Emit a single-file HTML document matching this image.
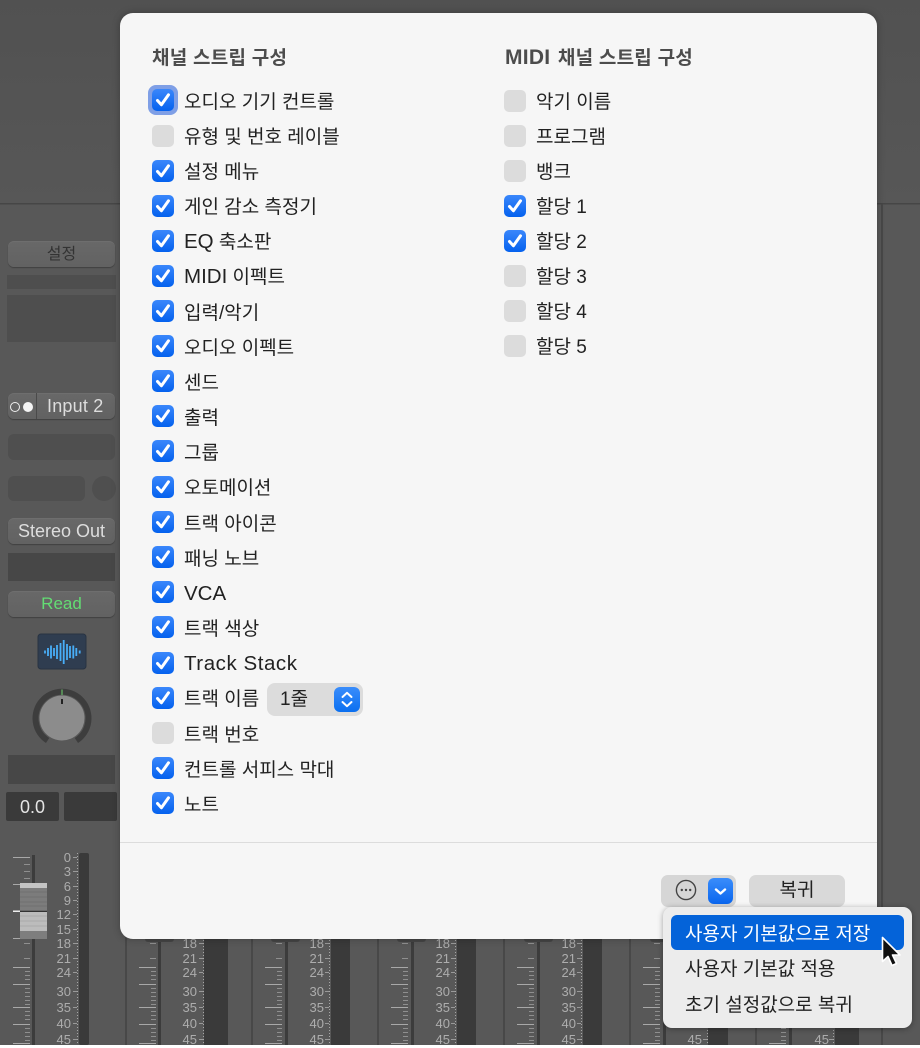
<!DOCTYPE html>
<html lang="ko"><head><meta charset="utf-8"><title>채널 스트립 구성</title>
<style>
html,body{margin:0;padding:0;background:#fff}
#p{position:relative;width:920px;height:1048px;overflow:hidden;background:#fff;font-family:"Liberation Sans","Noto Sans CJK KR",sans-serif}
#bg{position:absolute;left:0;top:0}
.a{position:absolute;box-sizing:border-box}
.btn{position:absolute;box-sizing:border-box;left:8px;width:107px;height:26px;border-radius:6px;background:linear-gradient(#686868,#626262);box-shadow:0 1px 1px #404040,inset 0 1px 0 #6e6e6e;color:#ddd;font-size:18px;line-height:26px;text-align:center}
.slot{position:absolute;background:#4f4f4f;border-radius:6px}
.box{position:absolute;background:#474747}
#panel{position:absolute;left:120px;top:13px;width:757px;height:926px;background:#f6f6f6;border-radius:13px;box-shadow:0 0 8px rgba(0,0,0,.28)}
.h{position:absolute;font-weight:bold;font-size:19px;line-height:26px;color:#4c4c4c;white-space:nowrap;top:46px;letter-spacing:.25px}
.t{position:absolute;font-size:19px;line-height:26px;color:#222;white-space:nowrap;margin-top:3px}
.l{font-size:20.5px;line-height:0}
.c{position:absolute;width:22px;height:22px;border-radius:5px;background:linear-gradient(#3a87fb,#0461ee)}
.c svg{position:absolute;left:0;top:0}
.u{position:absolute;width:22px;height:22px;border-radius:5px;background:#dcdcdc}
</style></head><body>
<div id="p">
<svg id="bg" width="920" height="1045" xmlns="http://www.w3.org/2000/svg" font-family="Liberation Sans" >
<defs>
<path id="k" d="M5.5 11.5L9.4 15.8L16.5 5.8" fill="none" stroke="#fff" stroke-width="3" stroke-linecap="round" stroke-linejoin="round"/>
<linearGradient id="tg" x1="0" y1="0" x2="0" y2="1"><stop offset="0" stop-color="#515151"/><stop offset="1" stop-color="#575757"/></linearGradient>
<g id="ticks" stroke="#a6a6a6" stroke-width="1" fill="none">
<path d="M13 857.5H30M13 884.5H30M13 938.5H30M13 967.5H30M13 984.5H30M13 1007.5H30M13 1024.5H30M13 1043.5H30" stroke="#a8a8a8"/>
<path d="M24 864.5H30M24 871.5H30M24 878.5H30M24 943.5H30M24 958.5H30M25 971.5H30M25 975.5H30M25 979.5H30M25 988.5H30M25 992.5H30M25 996.5H30M25 1000.5H30M25 1004.5H30M25 1011.5H30M25 1015.5H30M25 1019.5H30M25 1028.5H30M25 1032.5H30M25 1036.5H30M25 1040.5H30" stroke="#8f8f8f"/>
</g>
<g id="dash" stroke="#a6a6a6" fill="none">
<path d="M73 857.5H77M73 871.5H77M73 886.5H77M73 900.5H77M73 914.5H77M73 929.5H77M73 943.5H77M73 958.5H77M73 972.5H77M73 991.5H77M73 1007.5H77M73 1023.5H77M73 1039.5H77" stroke="#999"/>
<path d="M77.5 853V1045" stroke-dasharray="1 2"/>
</g>
</defs>
<rect width="920" height="1045" fill="#585858"/>
<rect width="920" height="203" fill="url(#tg)"/>
<rect y="203" width="920" height="1.5" fill="#464646"/>
<g fill="#484848">
<rect x="125" y="204" width="2" height="841"/><rect x="251" y="204" width="2" height="841"/><rect x="377" y="204" width="2" height="841"/><rect x="503" y="204" width="2" height="841"/><rect x="629" y="204" width="2" height="841"/><rect x="755" y="204" width="2" height="841"/><rect x="881" y="204" width="2" height="841"/>
</g>
<g fill="#3a3a3a">
<rect x="79" y="853" width="10" height="192" rx="2"/>
<rect x="204" y="939" width="24" height="106"/>
<rect x="331" y="939" width="19" height="106"/>
<rect x="457" y="939" width="19" height="106"/>
<rect x="583" y="939" width="19" height="106"/>
<rect x="708" y="939" width="20" height="106"/>
<rect x="835" y="939" width="24" height="106"/>
</g>
<g fill="#3c3c3c">
<rect x="32" y="855" width="3" height="190"/>
<rect x="158" y="939" width="3" height="106"/>
<rect x="285" y="939" width="3" height="106"/>
<rect x="411" y="939" width="3" height="106"/>
<rect x="537" y="939" width="3" height="106"/>
<rect x="663" y="939" width="3" height="106"/>
<rect x="789" y="939" width="3" height="106"/>
</g>
<g fill="#464646">
<rect x="145" y="936" width="29" height="6" rx="3"/><rect x="271" y="936" width="29" height="6" rx="3"/><rect x="397" y="936" width="29" height="6" rx="3"/><rect x="524" y="936" width="29" height="6" rx="3"/><rect x="650" y="936" width="29" height="6" rx="3"/>
</g>
<use href="#ticks"/><use href="#ticks" x="126"/><use href="#ticks" x="252"/><use href="#ticks" x="378"/><use href="#ticks" x="504"/><use href="#ticks" x="630"/><use href="#ticks" x="756"/>
<use href="#dash"/><use href="#dash" x="126"/><use href="#dash" x="252"/><use href="#dash" x="378"/><use href="#dash" x="504"/><use href="#dash" x="630"/><use href="#dash" x="756"/>
<g font-size="13" fill="#adadad" text-anchor="end">
<text x="71" y="862">0</text><text x="71" y="876">3</text><text x="71" y="891">6</text><text x="71" y="905">9</text><text x="71" y="919">12</text><text x="71" y="934">15</text><text x="71" y="948">18</text><text x="71" y="963">21</text><text x="71" y="977">24</text><text x="71" y="996">30</text><text x="71" y="1012">35</text><text x="71" y="1028">40</text><text x="71" y="1044">45</text>
<text x="197" y="948">18</text><text x="197" y="963">21</text><text x="197" y="977">24</text><text x="197" y="996">30</text><text x="197" y="1012">35</text><text x="197" y="1028">40</text><text x="197" y="1044">45</text>
<text x="324" y="948">18</text><text x="324" y="963">21</text><text x="324" y="977">24</text><text x="324" y="996">30</text><text x="324" y="1012">35</text><text x="324" y="1028">40</text><text x="324" y="1044">45</text>
<text x="450" y="948">18</text><text x="450" y="963">21</text><text x="450" y="977">24</text><text x="450" y="996">30</text><text x="450" y="1012">35</text><text x="450" y="1028">40</text><text x="450" y="1044">45</text>
<text x="576" y="948">18</text><text x="576" y="963">21</text><text x="576" y="977">24</text><text x="576" y="996">30</text><text x="576" y="1012">35</text><text x="576" y="1028">40</text><text x="576" y="1044">45</text>
<text x="702" y="948">18</text><text x="702" y="963">21</text><text x="702" y="977">24</text><text x="702" y="996">30</text><text x="702" y="1012">35</text><text x="702" y="1028">40</text><text x="702" y="1044">45</text>
<text x="829" y="1044">45</text>
</g>
<rect x="20" y="883" width="27" height="56" rx="1.5" fill="#a0a0a0"/>
<rect x="20" y="883" width="27" height="5" fill="#c4c4c4"/>
<rect x="20" y="888" width="27" height="22" fill="#7c7c7c"/>
<path d="M20 892H47M20 897H47M20 902H47M20 906H47" stroke="#707070"/>
<rect x="20" y="912" width="27" height="19" fill="#bcbcbc"/>
<path d="M20 916H47M20 921H47M20 926H47" stroke="#aaa"/>
<rect x="20" y="931" width="27" height="8" fill="#7e7e7e"/>
<rect x="20" y="910.5" width="27" height="1.5" fill="#333"/>
<rect x="13" y="910.5" width="7" height="1.5" fill="#eee"/>
<path d="M47.6 740.5A26.5 26.5 0 1 1 76.4 740.5" fill="none" stroke="#3d3d3d" stroke-width="6"/>
<path d="M62 689.5V695" stroke="#5fa25f" stroke-width="1.5"/>
<circle cx="62" cy="718" r="22.5" fill="#8c8c8c"/>
<path d="M62 699V704" stroke="#222" stroke-width="2"/>
<rect x="38" y="634" width="48" height="35" rx="3" fill="#2f3d50" stroke="#283342"/>
<g stroke="#48aef8" stroke-width="1.8" fill="none">
<path d="M45 650.500V653.500M48 648V656M51 645.500V658.500M54 648V656M57 645V659M60.500 643V661M63.700 640V664M67 644V660M70 646V658M73.300 645.500V658.500M76.300 648V656M79.700 650.500V653.500"/>
</g>
</svg>

<div class="btn" style="top:241px;color:#333;font-size:16px;line-height:27px">설정</div>
<div class="box" style="left:7px;top:275px;width:109px;height:14px;background:#4e4e4e"></div>
<div class="box" style="left:7px;top:295px;width:109px;height:47px;background:#4e4e4e"></div>
<div class="btn" style="top:393px;text-align:left;padding-left:39px;font-size:18px;letter-spacing:.2px">Input 2</div>
<div class="a" style="left:36px;top:393px;width:1px;height:26px;background:#4a4a4a"></div>
<div class="a" style="left:10px;top:402px;width:10px;height:10px;border:1.5px solid #eee;border-radius:50%"></div>
<div class="a" style="left:23px;top:402px;width:10px;height:10px;background:#f4f4f4;border-radius:50%"></div>
<div class="slot" style="left:8px;top:434px;width:107px;height:26px"></div>
<div class="slot" style="left:8px;top:476px;width:77px;height:25px"></div>
<div class="slot" style="left:92px;top:476px;width:24px;height:25px;border-radius:50%"></div>
<div class="btn" style="top:518px">Stereo Out</div>
<div class="box" style="left:8px;top:553px;width:107px;height:28px"></div>
<div class="btn" style="top:591px;color:#63dd73;font-size:17px">Read</div>
<div class="box" style="left:8px;top:755px;width:107px;height:29px"></div>
<div class="box" style="left:6px;top:792px;width:53px;height:29px;background:#3a3a3a;color:#e4e4e4;font-size:18px;line-height:31px;text-align:center;border-radius:2px">0.0</div>
<div class="box" style="left:64px;top:792px;width:53px;height:29px;background:#3a3a3a;border-radius:2px"></div>

<div id="panel"></div>
<div class="h" style="left:152px">채널 스트립 구성</div>
<div class="h" style="left:505px"><span style="font-size:21px;line-height:0;margin-right:2px">MIDI</span> 채널 스트립 구성</div>

<div class="a" style="left:148px;top:85px;width:30px;height:30px;border-radius:8px;background:#7f9fe6"></div>
<div class="c" style="left:152px;top:89px"><svg width="22" height="22"><use href="#k"/></svg></div><div class="t" style="left:184px;top:87px">오디오 기기 컨트롤</div>
<div class="u" style="left:152px;top:125px"></div><div class="t" style="left:184px;top:122px">유형 및 번호 레이블</div>
<div class="c" style="left:152px;top:160px"><svg width="22" height="22"><use href="#k"/></svg></div><div class="t" style="left:184px;top:157px">설정 메뉴</div>
<div class="c" style="left:152px;top:195px"><svg width="22" height="22"><use href="#k"/></svg></div><div class="t" style="left:184px;top:192px">게인 감소 측정기</div>
<div class="c" style="left:152px;top:230px"><svg width="22" height="22"><use href="#k"/></svg></div><div class="t" style="left:184px;top:227px"><span class="l">EQ</span> 축소판</div>
<div class="c" style="left:152px;top:265px"><svg width="22" height="22"><use href="#k"/></svg></div><div class="t" style="left:184px;top:262px"><span class="l">MIDI</span> 이펙트</div>
<div class="c" style="left:152px;top:300px"><svg width="22" height="22"><use href="#k"/></svg></div><div class="t" style="left:184px;top:298px">입력/악기</div>
<div class="c" style="left:152px;top:335px"><svg width="22" height="22"><use href="#k"/></svg></div><div class="t" style="left:184px;top:333px">오디오 이펙트</div>
<div class="c" style="left:152px;top:370px"><svg width="22" height="22"><use href="#k"/></svg></div><div class="t" style="left:184px;top:368px">센드</div>
<div class="c" style="left:152px;top:405px"><svg width="22" height="22"><use href="#k"/></svg></div><div class="t" style="left:184px;top:403px">출력</div>
<div class="c" style="left:152px;top:440px"><svg width="22" height="22"><use href="#k"/></svg></div><div class="t" style="left:184px;top:438px">그룹</div>
<div class="c" style="left:152px;top:476px"><svg width="22" height="22"><use href="#k"/></svg></div><div class="t" style="left:184px;top:473px">오토메이션</div>
<div class="c" style="left:152px;top:511px"><svg width="22" height="22"><use href="#k"/></svg></div><div class="t" style="left:184px;top:509px">트랙 아이콘</div>
<div class="c" style="left:152px;top:546px"><svg width="22" height="22"><use href="#k"/></svg></div><div class="t" style="left:184px;top:544px">패닝 노브</div>
<div class="c" style="left:152px;top:581px"><svg width="22" height="22"><use href="#k"/></svg></div><div class="t" style="left:184px;top:579px"><span class="l">VCA</span></div>
<div class="c" style="left:152px;top:616px"><svg width="22" height="22"><use href="#k"/></svg></div><div class="t" style="left:184px;top:614px">트랙 색상</div>
<div class="c" style="left:152px;top:652px"><svg width="22" height="22"><use href="#k"/></svg></div><div class="t" style="left:184px;top:649px"><span class="l" style="letter-spacing:.55px">Track Stack</span></div>
<div class="c" style="left:152px;top:687px"><svg width="22" height="22"><use href="#k"/></svg></div><div class="t" style="left:184px;top:684px">트랙 이름</div>
<div class="a" style="left:267px;top:683px;width:96px;height:33px;border-radius:8px;background:#dcdcdc"></div>
<div class="t" style="left:280px;top:684px">1줄</div>
<div class="a" style="left:334px;top:687px;width:26px;height:25px;border-radius:6px;background:linear-gradient(#3a8dfb,#0a6ff0)"><svg width="26" height="25"><path d="M8.5 10L13 5.800L17.500 10M8.500 15L13 19.200L17.500 15" fill="none" stroke="#fff" stroke-width="2" stroke-linecap="round" stroke-linejoin="round"/></svg></div>
<div class="u" style="left:152px;top:722px"></div><div class="t" style="left:184px;top:720px">트랙 번호</div>
<div class="c" style="left:152px;top:757px"><svg width="22" height="22"><use href="#k"/></svg></div><div class="t" style="left:184px;top:755px">컨트롤 서피스 막대</div>
<div class="c" style="left:152px;top:792px"><svg width="22" height="22"><use href="#k"/></svg></div><div class="t" style="left:184px;top:790px">노트</div>

<div class="u" style="left:504px;top:90px"></div><div class="t" style="left:536px;top:87px">악기 이름</div>
<div class="u" style="left:504px;top:125px"></div><div class="t" style="left:536px;top:122px">프로그램</div>
<div class="u" style="left:504px;top:160px"></div><div class="t" style="left:536px;top:157px">뱅크</div>
<div class="c" style="left:504px;top:195px"><svg width="22" height="22"><use href="#k"/></svg></div><div class="t" style="left:536px;top:192px">할당 1</div>
<div class="c" style="left:504px;top:230px"><svg width="22" height="22"><use href="#k"/></svg></div><div class="t" style="left:536px;top:227px">할당 2</div>
<div class="u" style="left:504px;top:265px"></div><div class="t" style="left:536px;top:262px">할당 3</div>
<div class="u" style="left:504px;top:300px"></div><div class="t" style="left:536px;top:297px">할당 4</div>
<div class="u" style="left:504px;top:335px"></div><div class="t" style="left:536px;top:332px">할당 5</div>

<div class="a" style="left:120px;top:841.5px;width:757px;height:1.5px;background:#dcdcdc"></div>

<div class="a" style="left:661px;top:875px;width:75px;height:32px;border-radius:7px;background:#d6d6d6"></div>
<svg class="a" style="left:675px;top:879px" width="22" height="22"><circle cx="11" cy="11" r="9.6" fill="none" stroke="#444" stroke-width="1.4"/><circle cx="6.8" cy="11" r="1.2" fill="#444"/><circle cx="11" cy="11" r="1.2" fill="#444"/><circle cx="15.2" cy="11" r="1.2" fill="#444"/></svg>
<div class="a" style="left:708px;top:878px;width:25px;height:26px;border-radius:6px;background:linear-gradient(#3a8dfb,#0a66ee)"><svg width="25" height="26"><path d="M8 11.500L12.500 15.500L17 11.500" fill="none" stroke="#fff" stroke-width="2.400" stroke-linecap="round" stroke-linejoin="round"/></svg></div>
<div class="a" style="left:749px;top:875px;width:96px;height:32px;border-radius:7px;background:#d9d9d9;color:#222;font-size:19px;line-height:32px;text-align:center">복귀</div>

<div class="a" style="left:663px;top:907px;width:249px;height:121px;border-radius:9px;background:#ececec;box-shadow:0 1px 6px rgba(0,0,0,.35)"></div>
<div class="a" style="left:671px;top:915px;width:233px;height:35px;border-radius:6px;background:#0463d9"></div>
<div class="t" style="left:685px;top:919px;color:#fff">사용자 기본값으로 저장</div>
<div class="t" style="left:685px;top:954px">사용자 기본값 적용</div>
<div class="t" style="left:685px;top:990px">초기 설정값으로 복귀</div>

<svg class="a" style="left:878px;top:934px" width="28" height="38"><path d="M4.500 3.500V27.500L10 22.500L14 31.500L18.500 29.500L14.500 21H22Z" fill="#111" stroke="#fff" stroke-width="1.600" stroke-linejoin="round"/></svg>
</div>
</body></html>
